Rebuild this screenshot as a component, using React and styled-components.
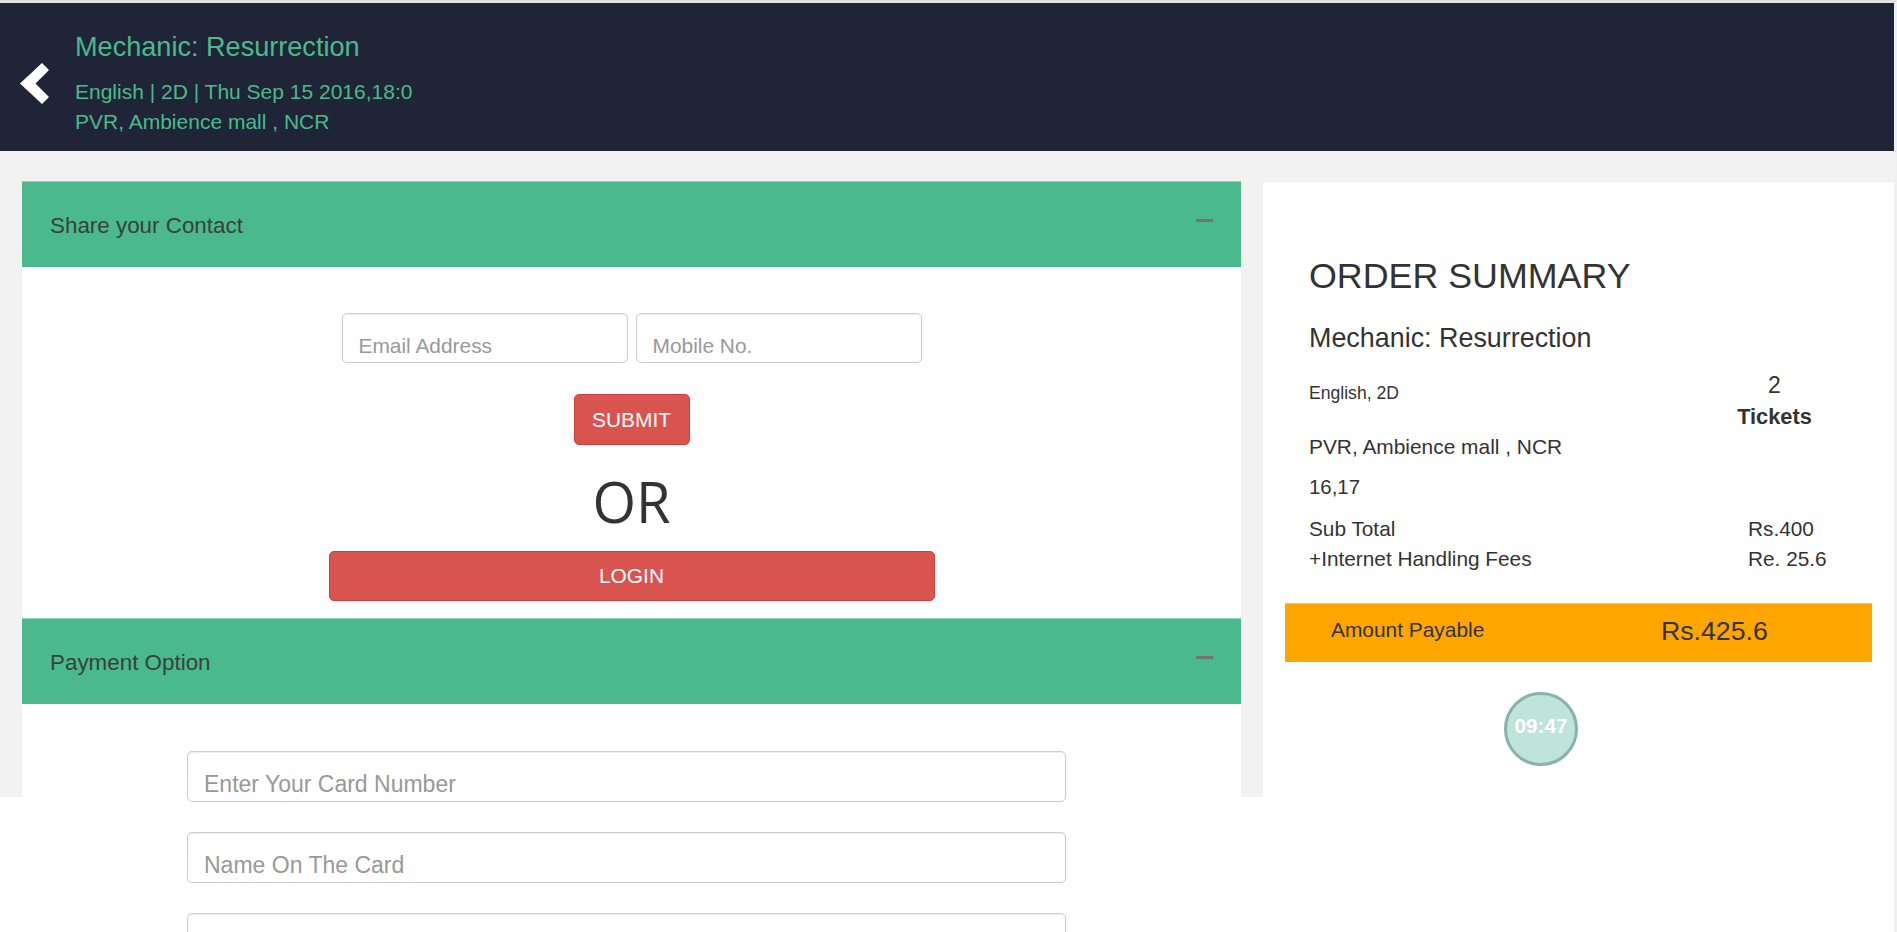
import React from 'react'
import styled, { createGlobalStyle } from 'styled-components'

const GREEN = '#4aba8e'
const RED = '#d9534f'

const GlobalStyle = createGlobalStyle`
  html, body {
    margin: 0;
    padding: 0;
    overflow: hidden;
    background: #fff;
    font-family: "Liberation Sans", Arial, sans-serif;
    color: #333;
  }
  * {
    box-sizing: border-box;
  }
`

// Components
const BackIcon = () => (
  <svg width="29" height="41" viewBox="0 0 29 41">
    <polygon points="22,0 29,7 15.5,20.5 29,34 22,41 0,20.5" fill="#fff" />
  </svg>
)

const Section = ({ title, children, top }) => (
  <Panel>
    <SectionHeader>
      <SectionTitle>{title}</SectionTitle>
      <Collapse aria-label="collapse" />
    </SectionHeader>
    <SectionBody top={top}>{children}</SectionBody>
  </Panel>
)

const App = () => {
  return (
    <Page>
      <GlobalStyle />
      <TopBar>
        <BackButton aria-label="back">
          <BackIcon />
        </BackButton>
        <ShowInfo>
          <ShowTitle>Mechanic: Resurrection</ShowTitle>
          <ShowMeta first>English | 2D | Thu Sep 15 2016,18:0</ShowMeta>
          <ShowMeta>PVR, Ambience mall , NCR</ShowMeta>
        </ShowInfo>
      </TopBar>

      <Content>
        <Checkout>
          <Section title="Share your Contact" top={46}>
            <ContactRow>
              <TextInput width={286} placeholder="Email Address" />
              <TextInput width={286} placeholder="Mobile No." />
            </ContactRow>
            <SubmitButton>SUBMIT</SubmitButton>
            <Divider>OR</Divider>
            <LoginButton>LOGIN</LoginButton>
          </Section>

          <Section title="Payment Option" top={47}>
            <CardFields>
              <CardInput placeholder="Enter Your Card Number" />
              <CardInput placeholder="Name On The Card" />
              <CardInput placeholder="" />
            </CardFields>
          </Section>
        </Checkout>

        <Summary>
          <SummaryTitle>ORDER SUMMARY</SummaryTitle>
          <MovieName>Mechanic: Resurrection</MovieName>
          <FormatRow>
            <Format>English, 2D</Format>
            <TicketCount>
              <span>2</span>
              <strong>Tickets</strong>
            </TicketCount>
          </FormatRow>
          <Venue>PVR, Ambience mall , NCR</Venue>
          <Seats>16,17</Seats>
          <PriceRow first>
            <span>Sub Total</span>
            <span>Rs.400</span>
          </PriceRow>
          <PriceRow>
            <span>+Internet Handling Fees</span>
            <span>Re. 25.6</span>
          </PriceRow>
          <Payable>
            <PayableLabel>Amount Payable</PayableLabel>
            <PayableAmount>Rs.425.6</PayableAmount>
          </Payable>
          <Timer>09:47</Timer>
        </Summary>
      </Content>
    </Page>
  )
}

// Styles
const Page = styled.div`
  width: 100%;
  min-height: 100vh;
  border-top: 3px solid #e2e2e2;
  border-right: 3px solid #f0f0f0;
`

const TopBar = styled.header`
  height: 148px;
  background: #1f2536;
  display: flex;
  align-items: flex-start;
  padding-left: 20px;
`

const BackButton = styled.button`
  margin-top: 60px;
  padding: 0;
  border: 0;
  background: none;
  display: flex;
  cursor: pointer;
`

const ShowInfo = styled.div`
  margin-left: 26px;
  padding-top: 29px;
  color: ${GREEN};
`

const ShowTitle = styled.h3`
  margin: 0;
  font-size: 27.1px;
  font-weight: 400;
  line-height: 30px;
`

const ShowMeta = styled.div`
  margin-top: ${({ first }) => (first ? '15px' : '0')};
  font-size: 21px;
  line-height: 30px;
`

const Content = styled.main`
  height: 646px;
  background: #f2f2f2;
  display: flex;
  align-items: flex-start;
  gap: 22px;
  padding: 30px 0 0 22px;
`

const Checkout = styled.div`
  width: 1219px;
  flex-shrink: 0;
`

const Panel = styled.section`
  background: #fff;
  border-radius: 4px;
`

const SectionHeader = styled.div`
  height: 86px;
  background: ${GREEN};
  border-top: 1px solid #8fd3b8;
  display: flex;
  align-items: center;
  justify-content: space-between;
  padding: 3px 28px 0;
`

const SectionTitle = styled.h4`
  margin: 0;
  font-size: 22.4px;
  font-weight: 400;
  color: #39403c;
`

const Collapse = styled.span`
  align-self: flex-start;
  margin-top: 34px;
  width: 17px;
  height: 3px;
  background: #737373;
`

const SectionBody = styled.div`
  padding: ${({ top }) => top}px 0 17px;
  display: flex;
  flex-direction: column;
  align-items: center;
  border-radius: 0 0 4px 4px;
`

const ContactRow = styled.div`
  display: flex;
  gap: 8px;
`

const TextInput = styled.input`
  width: ${({ width }) => width}px;
  height: 50px;
  padding: 18px 16px 2px;
  border: 1px solid #ccc;
  border-radius: 5px;
  font-family: inherit;
  font-size: 20.9px;
  color: #555;
  outline: none;
  box-shadow: inset 0 1px 1px rgba(0, 0, 0, 0.075);

  &::placeholder {
    color: #999;
  }
`

const CardFields = styled.div`
  align-self: flex-start;
  margin-left: 165px;
  display: flex;
  flex-direction: column;
  gap: 30px;
`

const CardInput = styled(TextInput)`
  width: 879px;
  height: 51px;
  padding: 19px 16px 3px;
  font-size: 23px;
`

const RedButton = styled.button`
  height: 51px;
  background: ${RED};
  border: 1px solid #d43f3a;
  border-radius: 5px;
  color: #fff;
  font-family: inherit;
  font-size: 20.9px;
  cursor: pointer;
`

const SubmitButton = styled(RedButton)`
  width: 116px;
  margin-top: 31px;
`

const LoginButton = styled(RedButton)`
  width: 606px;
  height: 50px;
`

const Divider = styled.div`
  height: 62px;
  margin: 25px 0 19px;
  font-family: "Open Sans", "Liberation Sans", sans-serif;
  font-size: 56px;
  line-height: 62px;
  color: #333;
`

const Summary = styled.aside`
  width: 631px;
  align-self: stretch;
  background: #fff;
  border-top: 1px solid #ececec;
  padding: 74px 22px 0;
`

const Indented = styled.div`
  padding-left: 24px;
`

const SummaryTitle = styled(Indented)`
  font-size: 35.8px;
  line-height: 40px;
`

const MovieName = styled(Indented)`
  margin-top: 27px;
  font-size: 26.9px;
  line-height: 30px;
`

const FormatRow = styled(Indented)`
  margin-top: 17px;
  display: flex;
  align-items: flex-start;
`

const Format = styled.div`
  width: 428px;
  margin-top: 11px;
  font-size: 17.6px;
  line-height: 24px;
`

const TicketCount = styled.div`
  width: 75px;
  display: flex;
  flex-direction: column;
  align-items: center;

  span {
    font-size: 23px;
    line-height: 30px;
  }

  strong {
    font-size: 21.8px;
    line-height: 34px;
  }
`

const Venue = styled(Indented)`
  font-size: 20.9px;
  line-height: 26px;
`

const Seats = styled(Indented)`
  margin-top: 14px;
  font-size: 20.4px;
  line-height: 26px;
`

const PriceRow = styled(Indented)`
  margin-top: ${({ first }) => (first ? '14px' : '0')};
  display: grid;
  grid-template-columns: 439px auto;
  font-size: 20.8px;
  line-height: 30px;
`

const Payable = styled.div`
  margin-top: 29px;
  height: 59px;
  background: #ffa500;
  border-top: 1px solid #ffc25a;
  display: flex;
  align-items: flex-start;
  padding-left: 46px;
  color: #333;
`

const PayableLabel = styled.div`
  width: 330px;
  margin-top: 14px;
  font-size: 20.9px;
  line-height: 24px;
`

const PayableAmount = styled.div`
  margin-top: 11px;
  font-size: 26.7px;
  line-height: 32px;
`

const Timer = styled.div`
  width: 74px;
  height: 74px;
  margin: 30px 0 0 219px;
  padding-top: 19px;
  border-radius: 50%;
  border: 3px solid #88b2ae;
  background: #bfe4dc;
  color: #fff;
  font-size: 20.7px;
  font-weight: 700;
  line-height: 24px;
  text-align: center;
`

export default App
